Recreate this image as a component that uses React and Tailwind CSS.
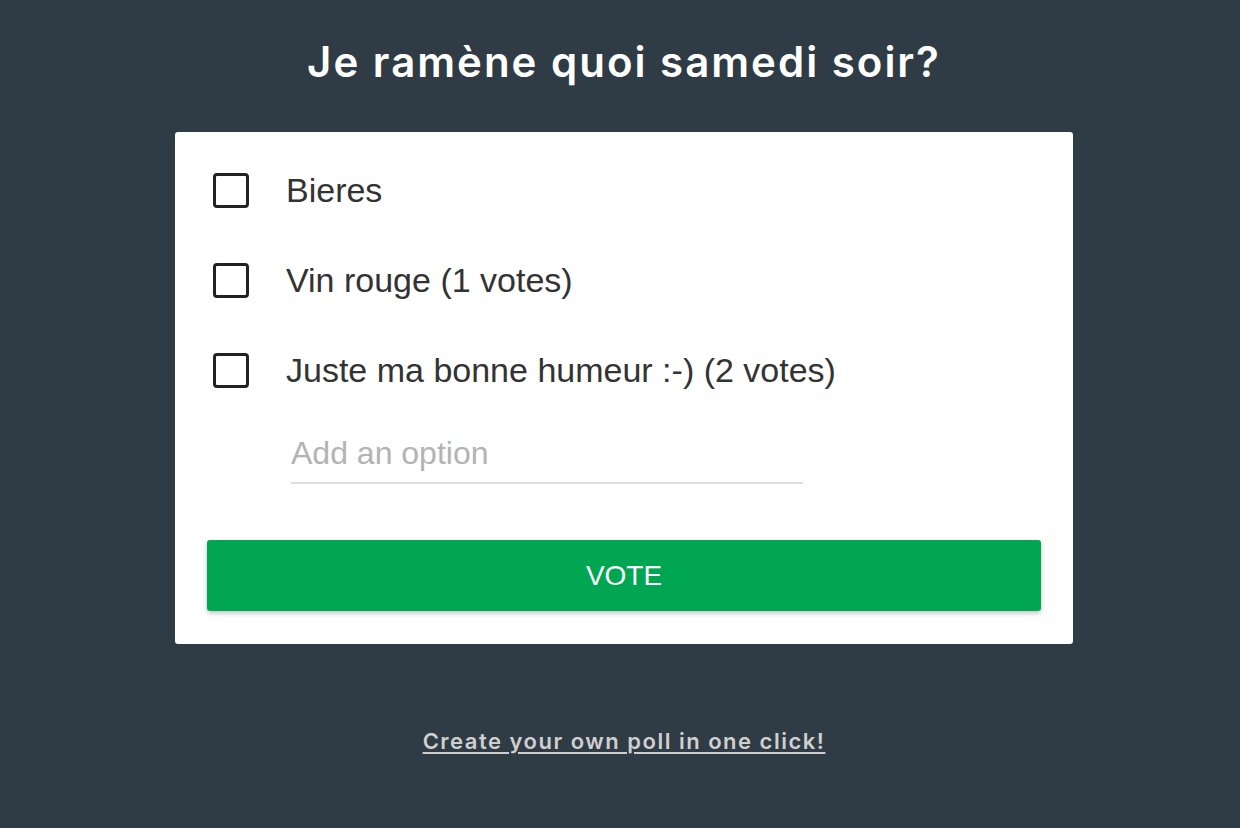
import React, { useState } from 'react';

const options = [
  { label: 'Bieres', votes: 0 },
  { label: 'Vin rouge', votes: 1 },
  { label: 'Juste ma bonne humeur :-)', votes: 2 },
];

export default function App() {
  const [checked, setChecked] = useState([]);
  const [newOpt, setNewOpt] = useState('');

  const toggle = (i) =>
    setChecked(c => (c.includes(i) ? c.filter(x => x !== i) : [...c, i]));

  return (
    <div className="min-h-[828px] w-full bg-[#2f3b45] flex flex-col items-center pl-[8px]">
      <h1 className="mt-[36px] text-white text-[42px] leading-[52px] font-semibold tracking-[2px] font-['Inter',sans-serif]">
        Je ramène quoi samedi soir?
      </h1>

      <div className="mt-[44px] w-[898px] bg-white rounded-[3px] px-[32px] pt-[13px] pb-[33px] font-['Liberation_Sans',Arial,sans-serif]">
        <div className="flex flex-col">
          {options.map((o, i) => (
            <label key={i} className="flex items-center h-[90px] pl-[6px] cursor-pointer">
              <span
                onClick={() => toggle(i)}
                className="w-[36px] h-[35px] border-[3px] border-[#222] rounded-[4px] flex-shrink-0 flex items-center justify-center"
              >
                {checked.includes(i) && <span className="w-[18px] h-[18px] bg-[#222] rounded-[2px]" />}
              </span>
              <span className="ml-[37px] text-[34px] text-[#333] leading-none">
                {o.label}{o.votes > 0 ? ` (${o.votes} votes)` : ''}
              </span>
            </label>
          ))}
        </div>

        <div className="pl-[84px] mt-[13px]">
          <input
            value={newOpt}
            onChange={e => setNewOpt(e.target.value)}
            placeholder="Add an option"
            className="w-[512px] h-[56px] pb-[4px] border-b-2 border-[#dddddd] text-[32px] text-[#333] placeholder:text-[#b3b3b3] outline-none bg-transparent"
          />
        </div>

        <button className="mt-[56px] w-full h-[71px] rounded-[3px] bg-[#00a651] text-white text-[28px] shadow-[0_2px_5px_rgba(0,0,0,0.26)]">
          VOTE
        </button>
      </div>

      <a href="#" className="mt-[81px] text-[#cfcfcf] text-[22px] font-semibold tracking-[1.5px] underline underline-offset-[3px] font-['Inter',sans-serif]">
        Create your own poll in one click!
      </a>
    </div>
  );
}
